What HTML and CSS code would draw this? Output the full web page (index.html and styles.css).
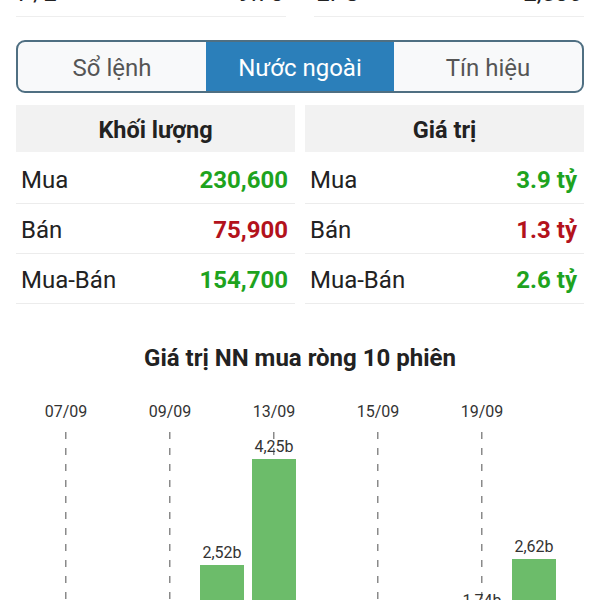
FILE: index.html
```html
<!DOCTYPE html>
<html lang="vi">
<head>
    <meta charset="UTF-8">
    <meta name="viewport" content="width=device-width, initial-scale=1.0">
    <title>Nước ngoài</title>
    <link rel="stylesheet" href="styles.css">
</head>
<body>
    <div class="stats">
        <div class="stat-row"><span>P/E</span><span>9.73</span></div>
        <div class="stat-row"><span>EPS</span><span>2,536</span></div>
    </div>

    <div class="tabs">
        <div class="tab">Sổ lệnh</div>
        <div class="tab tab-active">Nước ngoài</div>
        <div class="tab">Tín hiệu</div>
    </div>

    <div class="tables">
        <div class="box">
            <div class="box-head">Khối lượng</div>
            <div class="box-row"><span>Mua</span><span class="up">230,600</span></div>
            <div class="box-row"><span>Bán</span><span class="down">75,900</span></div>
            <div class="box-row"><span>Mua-Bán</span><span class="up">154,700</span></div>
        </div>
        <div class="box">
            <div class="box-head">Giá trị</div>
            <div class="box-row"><span>Mua</span><span class="up">3.9 tỷ</span></div>
            <div class="box-row"><span>Bán</span><span class="down">1.3 tỷ</span></div>
            <div class="box-row"><span>Mua-Bán</span><span class="up">2.6 tỷ</span></div>
        </div>
    </div>

    <p class="chart-title">Giá trị NN mua ròng 10 phiên</p>

    <div class="chart">
        <div class="col marked">
            <div class="date">07/09</div>
            <div class="plot"></div>
        </div>
        <div class="col">
            <div class="date"></div>
            <div class="plot"></div>
        </div>
        <div class="col marked">
            <div class="date">09/09</div>
            <div class="plot"></div>
        </div>
        <div class="col">
            <div class="date"></div>
            <div class="plot">
                <span class="bar-label">2,52b</span>
                <div class="bar" style="height: 154px"></div>
            </div>
        </div>
        <div class="col marked">
            <div class="date">13/09</div>
            <div class="plot">
                <span class="bar-label">4,25b</span>
                <div class="bar" style="height: 260px"></div>
            </div>
        </div>
        <div class="col">
            <div class="date"></div>
            <div class="plot"></div>
        </div>
        <div class="col marked">
            <div class="date">15/09</div>
            <div class="plot"></div>
        </div>
        <div class="col">
            <div class="date"></div>
            <div class="plot"></div>
        </div>
        <div class="col marked">
            <div class="date">19/09</div>
            <div class="plot">
                <span class="bar-label">1,74b</span>
                <div class="bar" style="height: 106px"></div>
            </div>
        </div>
        <div class="col">
            <div class="date"></div>
            <div class="plot">
                <span class="bar-label">2,62b</span>
                <div class="bar" style="height: 160px"></div>
            </div>
        </div>
    </div>
</body>
</html>
```

FILE: styles.css
```css
body{
    margin: 0;
    padding: 0 16px;
    background-color: white;
    color: #222;
    font-family: Roboto, "Noto Sans", sans-serif;
    overflow: hidden;
}

/* top stats row, cut off by the screen */
.stats{
    display: grid;
    grid-template-columns: 1fr 1fr;
    gap: 28px;
    margin-top: -30px;
}
.stat-row{
    display: flex;
    justify-content: space-between;
    height: 46px;
    line-height: 46px;
    font-size: 24px;
    padding: 0 2px;
    border-bottom: 1px solid #eeeeee;
}

/* tabs */
.tabs{
    display: flex;
    margin-top: 23px;
    border: 2px solid #4f6f82;
    border-radius: 9px;
    overflow: hidden;
    background-color: #f8f9fa;
}
.tab{
    flex: 1;
    height: 49px;
    padding-top: 3px;
    box-sizing: border-box;
    line-height: 46px;
    text-align: center;
    font-size: 24px;
    color: #555;
}
.tab-active{
    background-color: #2b7fba;
    color: white;
}

/* buy / sell tables */
.tables{
    display: grid;
    grid-template-columns: 1fr 1fr;
    gap: 10px;
    margin-top: 12px;
}
.box-head{
    height: 47px;
    padding-top: 3px;
    box-sizing: border-box;
    line-height: 44px;
    background-color: #f2f2f2;
    text-align: center;
    font-size: 23.5px;
    font-weight: bold;
    margin-bottom: 2px;
}
.box-row{
    display: flex;
    justify-content: space-between;
    align-items: center;
    padding: 3px 7px 0 5px;
    box-sizing: border-box;
    height: 50px;
    border-bottom: 1px solid #ececec;
    font-size: 24px;
}
.up{
    color: #1ea31e;
    font-weight: bold;
}
.down{
    color: #b3121c;
    font-weight: bold;
}

/* chart */
.chart-title{
    margin: 40px 0 0;
    text-align: center;
    font-size: 24px;
    font-weight: bold;
    line-height: 28px;
}
.chart{
    display: flex;
    justify-content: center;
    margin-top: 32px;
}
.col{
    width: 52px;
    display: flex;
    flex-direction: column;
    align-items: center;
}
.date{
    height: 16px;
    line-height: 16px;
    font-size: 16px;
    color: #333;
    white-space: nowrap;
}
.plot{
    margin-top: 12px;
    width: 100%;
    height: 287px;
    display: flex;
    flex-direction: column;
    justify-content: flex-end;
    align-items: center;
}
.marked .plot{
    background-image: repeating-linear-gradient(to bottom, #8a8a8a 0 7px, transparent 7px 16px);
    background-size: 1.5px 100%;
    background-position: center top;
    background-repeat: no-repeat;
}
.bar-label{
    font-size: 16px;
    color: #333;
    margin-bottom: 3px;
}
.bar{
    width: 44px;
    background-color: #6cbc6a;
}
```
